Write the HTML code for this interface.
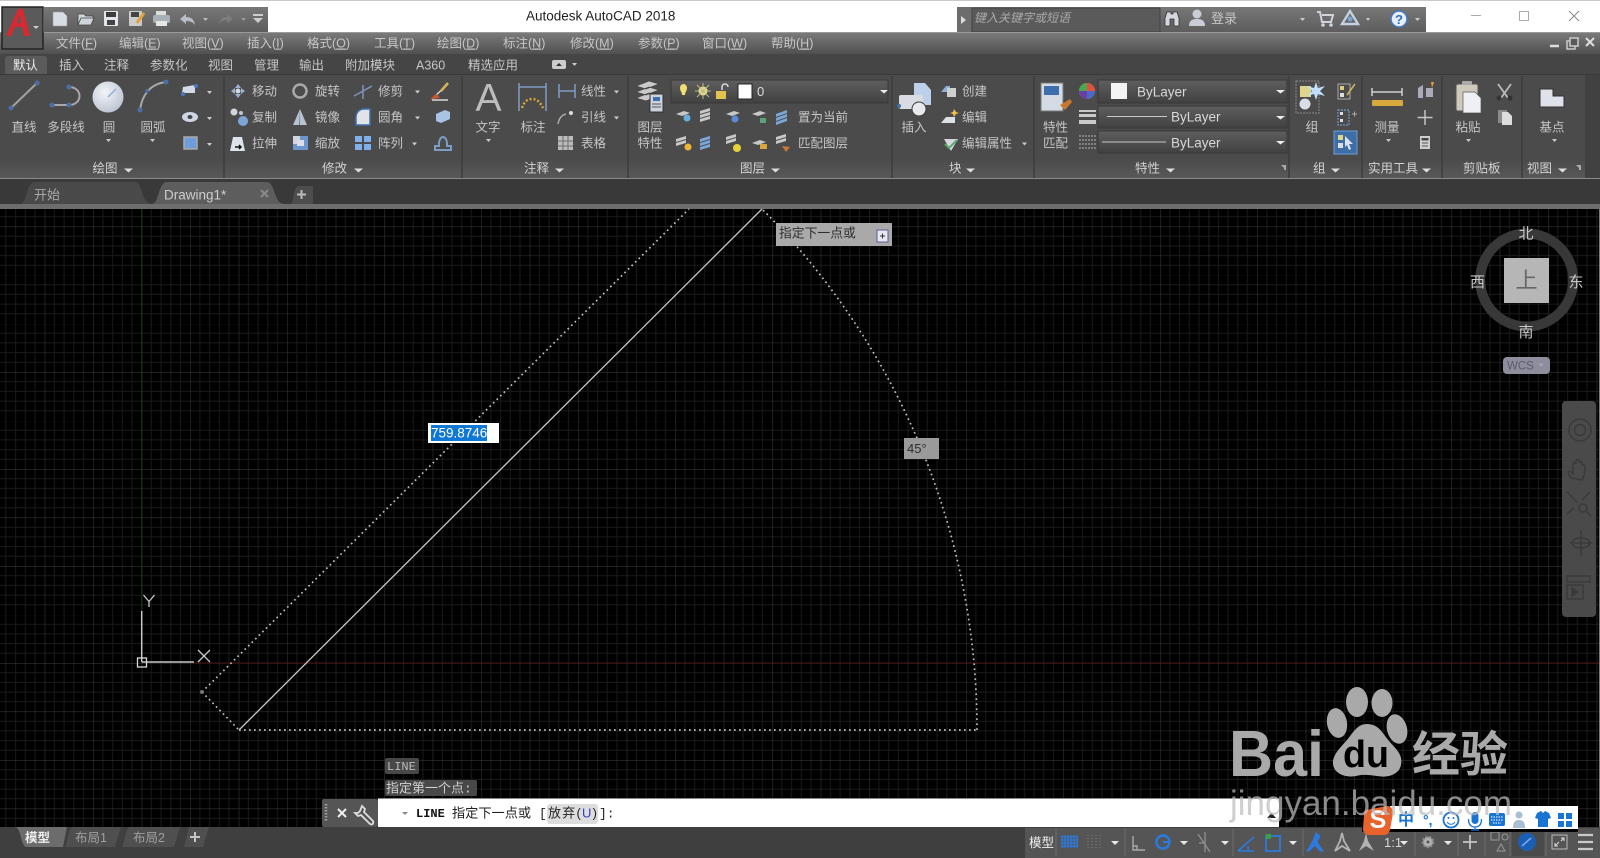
<!DOCTYPE html>
<html lang="zh"><head><meta charset="utf-8"><title>Autodesk AutoCAD 2018</title>
<style>
html,body{margin:0;padding:0;background:#000;width:1600px;height:858px;overflow:hidden}
svg{display:block;position:absolute;left:0;top:0;filter:blur(.35px)}
text{font-family:"Liberation Sans","Noto Sans CJK SC",sans-serif;font-size:12.5px;fill:#c6c6c6}
.m text,text.m{text-anchor:middle}
tspan.u{text-decoration:underline}
</style></head><body>
<svg width="1600" height="858" viewBox="0 0 1600 858" xmlns="http://www.w3.org/2000/svg">
<defs>
<pattern id="g" patternUnits="userSpaceOnUse" width="48.5" height="48.5" x="141.7" y="226.5">
<path d="M9.7 0V48.5M19.4 0V48.5M29.1 0V48.5M38.8 0V48.5M0 9.7H48.5M0 19.4H48.5M0 29.1H48.5M0 38.8H48.5" stroke="#1a1a1a" stroke-width="1" fill="none"/>
<path d="M0 0V48.5M0 0H48.5" stroke="#333" stroke-width="1.2" fill="none"/>
</pattern>
<linearGradient id="menu" x1="0" y1="0" x2="0" y2="1"><stop offset="0" stop-color="#7a7a7a"/><stop offset="1" stop-color="#505050"/></linearGradient>
<linearGradient id="qat" x1="0" y1="0" x2="0" y2="1"><stop offset="0" stop-color="#777"/><stop offset="1" stop-color="#5c5c5c"/></linearGradient>
<linearGradient id="foot" x1="0" y1="0" x2="0" y2="1"><stop offset="0" stop-color="#4a4a4a"/><stop offset="1" stop-color="#585858"/></linearGradient>
<linearGradient id="combo" x1="0" y1="0" x2="0" y2="1"><stop offset="0" stop-color="#5e5e5e"/><stop offset="1" stop-color="#414141"/></linearGradient>
<radialGradient id="cir" cx=".4" cy=".35" r=".8"><stop offset="0" stop-color="#f2f4f8"/><stop offset="1" stop-color="#b4bccb"/></radialGradient>
</defs>

<!-- title bar -->
<rect width="1600" height="33" fill="#fff"/>
<rect width="1600" height="1" fill="#c8c8c8"/>
<rect x="44" y="7" width="224" height="26" fill="url(#qat)"/>
<text x="526" y="20.5" style="font-size:13.5px;fill:#222">Autodesk AutoCAD 2018</text>
<rect x="957" y="7" width="469" height="26" fill="url(#qat)"/>
<rect x="957" y="7" width="14" height="26" fill="#6d6d6d"/>
<path d="M961 16l5 4-5 4z" fill="#ddd"/>
<rect x="972" y="8" width="188" height="24" fill="#5a5a5a" stroke="#444"/>
<text x="974" y="22" style="font-size:12px;fill:#aaa;font-style:italic">键入关键字或短语</text>
<!-- binoculars + user -->
<path d="M1165 26v-8l2-6h4v2h2v-2h4l2 6v8h-5v-7h-4v7z" fill="#d5d8de" stroke="#333" stroke-width=".8"/>
<circle cx="1197" cy="14" r="4.500" fill="#c9cdd5"/><path d="M1189 26c0-6 4-7 8-7s8 1 8 7z" fill="#c9cdd5"/>
<text x="1211" y="23" style="font-size:13px">登录</text>
<path d="M1300 18h5l-2.500 3z" fill="#ccc"/>
<path d="M1317 12h3l2 10h9l2-7h-11" fill="none" stroke="#d0d4da" stroke-width="2"/><circle cx="1323" cy="25" r="1.800" fill="#d0d4da"/><circle cx="1331" cy="25" r="1.800" fill="#d0d4da"/>
<path d="M1350 11l8 13h-16z" fill="none" stroke="#c3cfe2" stroke-width="2.400"/><circle cx="1350" cy="19" r="2.500" fill="#7fa4d8"/>
<path d="M1366 18h4l-2 3z" fill="#ccc"/>
<circle cx="1399" cy="19" r="8" fill="#e8eef6" stroke="#3f78c4" stroke-width="1.500"/>
<text class="m" x="1399" y="24" style="font-size:13px;font-weight:bold;fill:#2f6cc0">?</text>
<path d="M1415 18h5l-2.500 3z" fill="#ccc"/>
<!-- window controls -->
<path d="M1471 15.500h10" stroke="#aaa"/><rect x="1519.500" y="11.500" width="9" height="9" fill="none" stroke="#aaa"/><path d="M1569 11l10 10M1579 11l-10 10" stroke="#888"/>

<!-- qat icons -->
<path d="M53 12h10l4 4v10h-14z" fill="#d8dde4" stroke="#999" stroke-width=".5"/>
<path d="M78 14h6l2 2h7v2h-12l-3 7z M78 25l3-7h13l-3 7z" fill="#cfd4da" stroke="#444" stroke-width=".8"/>
<rect x="104" y="11" width="14" height="15" rx="1" fill="#e3e6ea"/><rect x="106" y="12" width="10" height="5" fill="#3c3c3c"/><rect x="107" y="20" width="8" height="5" fill="#444"/>
<rect x="129" y="11" width="13" height="15" rx="1" fill="#ccc"/><rect x="131" y="12" width="8" height="5" fill="#444"/><path d="M137 23l7-10" stroke="#e1a33c" stroke-width="3"/>
<rect x="156" y="11" width="10" height="5" fill="#ddd"/><rect x="153" y="15" width="17" height="8" rx="2" fill="#aab0b8"/><rect x="156" y="21" width="11" height="5" fill="#e6e6e6"/>
<path d="M180 19l6-5v3c5 0 8 2 9 8-2-3-5-4-9-4v3z" fill="#b7bec8"/>
<path d="M203 18h5l-2.500 3z" fill="#bbb"/>
<path d="M233 19l-6-5v3c-4 0-7 2-8 7 2-3 4-4 8-4v3z" fill="#7e7e7e"/>
<path d="M241 18h5l-2.500 3z" fill="#999"/>
<path d="M253 14h10v2h-10zM253 18h10l-5 5z" fill="#ccc"/>

<!-- menu bar -->
<rect y="33" width="1600" height="21" fill="url(#menu)"/>
<rect y="32" width="1600" height="1" fill="#999"/>
<g>
<text x="56" y="47.500">文件(<tspan class="u">F</tspan>)</text><text x="119" y="47.500">编辑(<tspan class="u">E</tspan>)</text><text x="182" y="47.500">视图(<tspan class="u">V</tspan>)</text><text x="247" y="47.500">插入(<tspan class="u">I</tspan>)</text><text x="307" y="47.500">格式(<tspan class="u">O</tspan>)</text><text x="374" y="47.500">工具(<tspan class="u">T</tspan>)</text><text x="437" y="47.500">绘图(<tspan class="u">D</tspan>)</text><text x="503" y="47.500">标注(<tspan class="u">N</tspan>)</text><text x="570" y="47.500">修改(<tspan class="u">M</tspan>)</text><text x="638" y="47.500">参数(<tspan class="u">P</tspan>)</text><text x="702" y="47.500">窗口(<tspan class="u">W</tspan>)</text><text x="771" y="47.500">帮助(<tspan class="u">H</tspan>)</text>
</g>
<path d="M1550 46h9" stroke="#ddd" stroke-width="2.500"/>
<rect x="1567" y="41" width="8" height="8" fill="none" stroke="#ccc" stroke-width="1.500"/><rect x="1570" y="38" width="8" height="8" fill="#5a5a5a" stroke="#ccc" stroke-width="1.500"/>
<path d="M1586 38l8 8M1594 38l-8 8" stroke="#ddd" stroke-width="2"/>

<!-- app button -->
<rect x="2" y="7" width="41" height="42" fill="#5a5a5a" stroke="#222" stroke-width="1.500"/>
<path d="M6 36L18 9h5l7 27h-6l-2-9h-7l-4 9zM17 23h4l-1-8z" fill="#d42a30" fill-rule="evenodd"/>
<path d="M33 26h6l-3 3z" fill="#ccc"/>

<!-- ribbon tab bar -->
<rect y="54" width="1600" height="20" fill="#454545"/>
<path d="M5 74v-16l2-2h38l2 2v16z" fill="#5b5b5b"/>
<g>
<text x="13" y="69.500" style="fill:#eee">默认</text><text x="59" y="69.500">插入</text><text x="104" y="69.500">注释</text><text x="150" y="69.500">参数化</text><text x="208" y="69.500">视图</text><text x="254" y="69.500">管理</text><text x="299" y="69.500">输出</text><text x="345" y="69.500">附加模块</text><text x="416" y="69.500">A360</text><text x="468" y="69.500">精选应用</text>
</g>
<rect x="552" y="60" width="14" height="9" rx="2" fill="#ccc"/><path d="M556 66l3-3 3 3z" fill="#333"/><path d="M572 63h5l-2.500 3z" fill="#ccc"/>

<!-- ribbon -->
<rect y="74" width="1600" height="104" fill="#4b4b4b"/>
<rect y="158" width="1585" height="20" fill="url(#foot)"/>
<rect x="1585" y="74" width="15" height="104" fill="#414141"/>
<rect y="74" width="1600" height="1" fill="#3a3a3a"/>
<rect y="178" width="1600" height="1" fill="#8a8a8a"/>
<path d="M224 76v102M462 76v102M628 76v102M892 76v102M1034 76v102M1289 76v102M1362 76v102M1442 76v102M1522 76v102" stroke="#3d3d3d" stroke-width="1.500"/>

<!-- draw panel -->
<path d="M11 108L36 84" stroke="#a2a2a2" stroke-width="2"/><circle cx="11" cy="108" r="2.500" fill="#4b6fa4"/><circle cx="37" cy="83" r="2.500" fill="#4b6fa4"/>
<path d="M52 105h17c14 0 14-18 0-18" fill="none" stroke="#a8a8a8" stroke-width="2"/><circle cx="52" cy="105" r="2.500" fill="#4b6fa4"/><circle cx="69" cy="105" r="2.500" fill="#4b6fa4"/><circle cx="69" cy="87" r="2.500" fill="#4b6fa4"/>
<circle cx="108" cy="97" r="15.500" fill="url(#cir)"/><path d="M108 97l8-8" stroke="#8fb0dc" stroke-width="1.500"/>
<path d="M140 110c2-15 10-26 26-28" fill="none" stroke="#a8a8a8" stroke-width="2"/><circle cx="140" cy="110" r="2.500" fill="#4b6fa4"/><circle cx="166" cy="82" r="2.500" fill="#4b6fa4"/><circle cx="147" cy="91" r="2" fill="#4b6fa4"/>
<g class="m"><text x="24" y="131.500">直线</text><text x="66" y="131.500">多段线</text><text x="109" y="131.500">圆</text><text x="153" y="131.500">圆弧</text></g>
<path d="M106 139h5l-2.500 3zM150 139h5l-2.500 3z" fill="#ccc"/>
<path d="M183 87l12-2v8h-13z" fill="#d5dbe6"/><circle cx="183" cy="94" r="2" fill="#4b78bd"/><circle cx="196" cy="86" r="2" fill="#4b78bd"/>
<ellipse cx="190" cy="117" rx="8" ry="5" fill="#cfd6e2"/><ellipse cx="190" cy="117" rx="2.500" ry="2" fill="#444"/>
<rect x="184" y="137" width="13" height="12" fill="#6f9cdb" stroke="#aaa" stroke-width="1.500"/>
<path d="M207 91h5l-2.500 3zM207 117h5l-2.500 3zM207 143h5l-2.500 3z" fill="#ccc"/>
<text class="m" x="105" y="172.500" style="fill:#d2d2d2">绘图</text><path d="M124 168.500h9l-4.500 4z" fill="#ddd"/>

<!-- modify panel -->
<path d="M238 84l3 4h-6zM238 98l3-4h-6zM231 91l4-3v6zM245 91l-4-3v6z" fill="#9bb3d3"/><circle cx="238" cy="91" r="2.500" fill="#cfd8e4"/>
<circle cx="300" cy="91" r="6.500" fill="none" stroke="#a9a9a9" stroke-width="2.500"/>
<path d="M354 96l18-10M363 85v14" stroke="#7e95b8" stroke-width="1.500"/>
<path d="M432 100h16M434 97l13-12" stroke="#d9d9d9" stroke-width="1.500"/><path d="M436 95l-3 3 5-1z" fill="#c9582f" stroke="#c9582f" stroke-width="2"/><path d="M441 91l7-8" stroke="#d6b35a" stroke-width="2.500"/>
<circle cx="234" cy="112" r="3.500" fill="#d2d6dc"/><circle cx="243" cy="121" r="5" fill="#7ea5d9"/><circle cx="241" cy="113" r="2" fill="#bfc8d4"/>
<path d="M300 109l7 16h-14z" fill="#b9c1cc"/><path d="M300 109v16h-1l1-16z" fill="#5a7fb4"/>
<path d="M356 125v-8c0-5 4-8 8-8h6v16z" fill="#e1e3e6" stroke="#3d6faf" stroke-width="1.500"/>
<path d="M436 114l9-4 5 2v7l-9 4-5-2z" fill="#a9c3e5"/>
<path d="M233 137h9l3 14h-15z" fill="#dfe4ec"/><path d="M235 147h6m-2-2l2 2-2 2" stroke="#111" stroke-width="1.500" fill="none"/>
<rect x="293" y="136" width="15" height="14" fill="#cfd6e0"/><rect x="300" y="136" width="8" height="14" fill="#6d96cc"/><rect x="293" y="144" width="15" height="6" fill="#6d96cc"/><rect x="297" y="140" width="7" height="6" fill="#dde"/>
<path d="M355 136h7v6h-7zM364 136h7v6h-7zM355 144h7v6h-7zM364 144h7v6h-7z" fill="#7fb0ec"/>
<path d="M435 150v-4h4v-3c0-3 2-6 4-6s4 3 4 6v3h4v4z" fill="none" stroke="#7b9cc4" stroke-width="2"/>
<g><text x="252" y="95.500">移动</text><text x="315" y="95.500">旋转</text><text x="378" y="95.500">修剪</text><text x="252" y="121.500">复制</text><text x="315" y="121.500">镜像</text><text x="378" y="121.500">圆角</text><text x="252" y="147.500">拉伸</text><text x="315" y="147.500">缩放</text><text x="378" y="147.500">阵列</text></g>
<path d="M415 90.500h5l-2.500 3zM415 116.500h5l-2.500 3zM412 142.500h5l-2.500 3z" fill="#ccc"/>
<text x="322" y="172.500" style="fill:#d2d2d2">修改</text><path d="M354 168.500h9l-4.500 4z" fill="#ddd"/>

<!-- annotate panel -->
<text class="m" x="488.500" y="111" style="font-size:39px;fill:#bdbdbd">A</text>
<text class="m" x="488" y="131.500">文字</text><path d="M486 139h5l-2.500 3z" fill="#ccc"/>
<path d="M519 83v28M546 83v28M519 87h27" stroke="#7f9cc4" stroke-width="1.500"/><path d="M522 108c2-6 5-9 10-9s8 3 11 9" fill="none" stroke="#d9a43a" stroke-width="2.500" stroke-dasharray="2 2"/>
<text class="m" x="533" y="131.500">标注</text>
<path d="M559 84v14M575 84v14M559 91h16" stroke="#7f9cc4" stroke-width="1.500"/>
<path d="M558 124c1-6 4-9 8-10" fill="none" stroke="#aaa" stroke-width="1.500"/><circle cx="571" cy="113" r="2" fill="#ddd"/>
<rect x="558" y="136" width="15" height="14" fill="#bcbcbc"/><path d="M558 141h15M558 146h15M563 136v14M568 136v14" stroke="#6d6d6d"/>
<text x="581" y="95.500">线性</text><text x="581" y="121.500">引线</text><text x="581" y="147.500">表格</text>
<path d="M614 90.500h5l-2.500 3zM614 116.500h5l-2.500 3z" fill="#ccc"/>
<text x="524" y="172.500" style="fill:#d2d2d2">注释</text><path d="M555 168.500h9l-4.500 4z" fill="#ddd"/>

<!-- layer panel -->
<path d="M636 86l13-5 10 3-13 5zM636 92l13-5 10 3-13 5zM636 98l13-5 10 3-13 5z" fill="#c9c9c9" stroke="#444" stroke-width=".7"/>
<rect x="650" y="94" width="13" height="18" fill="#cdd3dc" stroke="#333"/><rect x="653" y="97" width="7" height="4" fill="#3d6faf"/><path d="M652 104h9M652 107h9" stroke="#555"/>
<text class="m" x="650" y="131.500">图层</text><text class="m" x="650" y="147.500">特性</text>
<rect x="671" y="80" width="217" height="23" fill="url(#combo)" stroke="#383838"/>
<path d="M680 88a3.500 4 0 1 1 7 0c0 3-2 4-2 7h-3c0-3-2-4-2-7z" fill="#f0de72"/><circle cx="703" cy="91" r="4.500" fill="#f2ea8a"/><path d="M703 83v16M695 91h16M697 85l12 12M709 85l-12 12" stroke="#bdb98c"/>
<rect x="716" y="91" width="10" height="8" fill="#e2c34e"/><path d="M722 90v-3c0-4 6-4 6 0" fill="none" stroke="#ddd" stroke-width="1.500"/>
<rect x="738" y="84" width="14" height="15" fill="#fff" stroke="#222"/>
<text x="757" y="96" style="font-size:13px;fill:#ddd">0</text>
<path d="M880 90h8l-4 3.500z" fill="#eee"/>
<g fill="#c8c8c8">
<path d="M676 114l8-3 6 2-8 3z"/><circle cx="687" cy="118" r="3.500" fill="#6aaee0"/>
<path d="M700 111l10-3v3l-10 3zM700 115l10-3v3l-10 3zM700 119l10-3v3l-10 3z"/>
<path d="M726 114l8-3 6 2-8 3z"/><circle cx="735" cy="119" r="3.500" fill="#5b8ad6"/>
<path d="M752 114l8-3 6 2-8 3z"/><path d="M760 118h6v5h-6z" fill="#59a377"/>
<path d="M776 114l11-4v3l-11 4zM776 118l11-4v3l-11 4zM776 122l11-4v3l-11 4z" fill="#7aa7d8"/>
<path d="M676 139l10-3v3l-10 3zM676 143l10-3v3l-10 3z"/><circle cx="688" cy="147" r="3.500" fill="#edb53a"/>
<path d="M700 139l10-3v3l-10 3zM700 143l10-3v3l-10 3zM700 147l10-3v3l-10 3z" fill="#7aa7d8"/>
<path d="M726 137l10-3v3l-10 3zM726 141l10-3v3l-10 3z"/><circle cx="737" cy="148" r="4" fill="#e8d23a"/>
<path d="M752 143l8-3 6 2-8 3z"/><rect x="760" y="144" width="7" height="5" fill="#d9a83a"/>
<path d="M776 137l10-3v3l-10 3zM776 141l10-3v3l-10 3z"/><path d="M782 146l8 1-4 5z" fill="#c87634"/>
</g>
<text x="798" y="121.500">置为当前</text><text x="798" y="147.500">匹配图层</text>
<text x="740" y="172.500" style="fill:#d2d2d2">图层</text><path d="M771 168.500h9l-4.500 4z" fill="#ddd"/>

<!-- block panel -->
<path d="M914 83h11l6 7v15h-17z" fill="#bcd0ea"/><rect x="899" y="95" width="24" height="14" rx="2" fill="#d8dce2"/><circle cx="919" cy="109" r="7" fill="#e7e9ec" stroke="#3c3c3c"/><circle cx="899" cy="106" r="2" fill="#3d6faf"/>
<text class="m" x="914" y="131.500">插入</text>
<path d="M941 92l5-6h4v6z" fill="#8fb0dc"/><rect x="947" y="88" width="9" height="9" fill="#cfcfcf"/>
<path d="M941 123l5-6 9 0v6z" fill="#dcdfe4"/><path d="M954 109l2 3 3 1-3 1-2 3-1-3-3-1 3-1z" fill="#efc04a"/>
<path d="M944 139h14l-7 12z" fill="#d5d8de"/><path d="M945 144l4 4 8-8" stroke="#5ca86e" stroke-width="2" fill="none"/>
<text x="962" y="95.500">创建</text><text x="962" y="121.500">编辑</text><text x="962" y="147.500">编辑属性</text>
<path d="M1022 142.500h5l-2.500 3z" fill="#ccc"/>
<text x="949" y="172.500" style="fill:#d2d2d2">块</text><path d="M966 168.500h9l-4.500 4z" fill="#ddd"/>

<!-- properties panel -->
<rect x="1041" y="83" width="22" height="28" fill="#d5dbe4" stroke="#777"/><rect x="1044" y="86" width="15" height="9" fill="#3d6faf"/>
<path d="M1060 105l10-6 2 3-7 8z" fill="#c77a2e"/>
<text x="1043" y="131.500">特性</text><text x="1043" y="147.500">匹配</text>
<circle cx="1087" cy="91" r="8" fill="#d9a13a"/><path d="M1087 91V83a8 8 0 0 1 8 8z" fill="#e2503f"/><path d="M1087 91h8a8 8 0 0 1-8 8z" fill="#4c69c9"/><path d="M1087 91v8a8 8 0 0 1-8-8z" fill="#6a3fa5"/><path d="M1087 91h-8a8 8 0 0 1 8-8z" fill="#4aa84f"/>
<path d="M1079 110h17v2h-17zM1079 114h17v3h-17zM1079 120h17v4h-17z" fill="#c9c9c9"/>
<path d="M1079 136h17M1079 140h17M1079 144h17M1079 148h17" stroke="#b5b5b5" stroke-dasharray="2 1"/>
<rect x="1098" y="80" width="189" height="23" fill="url(#combo)" stroke="#383838"/>
<rect x="1098" y="106" width="189" height="22" fill="url(#combo)" stroke="#383838"/>
<rect x="1098" y="131" width="189" height="22" fill="url(#combo)" stroke="#383838"/>
<rect x="1111" y="83" width="16" height="16" fill="#f4f4f4"/>
<text x="1137" y="96.500" style="font-size:13.500px;fill:#d8d8d8">ByLayer</text>
<path d="M1107 116.500h60M1102 142h64" stroke="#c8c8c8"/>
<text x="1171" y="121.500" style="font-size:13.500px;fill:#d8d8d8">ByLayer</text><text x="1171" y="147.500" style="font-size:13.500px;fill:#d8d8d8">ByLayer</text>
<path d="M1276 90h9l-4.500 3.500zM1276 116h9l-4.500 3.500zM1276 141h9l-4.500 3.500z" fill="#eee"/>
<text x="1135" y="172.500" style="fill:#d2d2d2">特性</text><path d="M1166 168.500h9l-4.500 4z" fill="#ddd"/>
<path d="M1281 165l5 0v5zM1286 170h-2v-2z" fill="#aaa"/>

<!-- group panel -->
<rect x="1296" y="81" width="23" height="32" fill="none" stroke="#888" stroke-dasharray="2 1"/><rect x="1300" y="86" width="11" height="11" fill="#e0d58a"/><circle cx="1305" cy="104" r="5.500" fill="#d8dde6"/>
<path d="M1316 82l2 6 7-2-5 5 5 5-7-2-2 6-2-6-7 2 5-5-5-5 7 2z" fill="#bfe0ff"/>
<text class="m" x="1312" y="131.500" style="font-size:13px">组</text>
<rect x="1338" y="84" width="12" height="15" fill="none" stroke="#aaa"/><rect x="1340" y="86" width="4" height="4" fill="#d9cf7a"/><rect x="1340" y="93" width="4" height="4" fill="#ddd"/><path d="M1347 95l8-11" stroke="#d6b35a" stroke-width="1.500"/>
<rect x="1338" y="110" width="11" height="15" fill="none" stroke="#7aa7d8" stroke-dasharray="2 1"/><rect x="1340" y="112" width="3" height="3" fill="#ddd"/><rect x="1340" y="119" width="3" height="3" fill="#ddd"/><path d="M1352 114h5M1354.500 111.500v5" stroke="#aaa"/>
<rect x="1334" y="131" width="23" height="23" fill="#3f6ea6" stroke="#6d9ed6"/><rect x="1338" y="135" width="5" height="5" fill="#e0d58a"/><rect x="1338" y="143" width="5" height="5" fill="#ddd"/><path d="M1345 136l8 8-4 0 2 5-2 1-2-5-2 2z" fill="#d9e4f2"/>
<text x="1313" y="172.500" style="fill:#d2d2d2">组</text><path d="M1331 168.500h9l-4.500 4z" fill="#ddd"/>

<!-- utilities -->
<path d="M1372 92h30M1372 88v8M1402 88v8" stroke="#d0d0d0" stroke-width="1.500"/><rect x="1372" y="100" width="31" height="6" rx="1" fill="#d9a93c"/>
<text class="m" x="1387" y="131.500">测量</text><path d="M1386 139h5l-2.500 3z" fill="#ccc"/>
<path d="M1418 88l5-3v13h-5zM1426 88h7v9h-7z" fill="#aab"/><path d="M1431 82l3 0-2 6z" fill="#e9a13c"/>
<path d="M1425 110v15M1417.500 117.500h15" stroke="#c5c5c5" stroke-width="1.500"/>
<rect x="1420" y="136" width="10" height="13" fill="#cfcfcf"/><rect x="1421.500" y="138" width="7" height="2.500" fill="#444"/><path d="M1422 143h6M1422 146h6" stroke="#555"/>
<text x="1368" y="172.500" style="fill:#d2d2d2">实用工具</text><path d="M1422 168.500h9l-4.500 4z" fill="#ddd"/>

<!-- clipboard -->
<rect x="1456" y="84" width="22" height="27" rx="2" fill="#cfc9bc" stroke="#555"/><rect x="1462" y="81" width="10" height="4" rx="1" fill="#aaa"/><path d="M1463 92h12l6 6v15h-18z" fill="#eef0f3" stroke="#555" stroke-width=".7"/>
<text class="m" x="1468" y="131.500">粘贴</text><path d="M1466 139h5l-2.500 3z" fill="#ccc"/>
<path d="M1498 84l10 14M1511 84l-10 14" stroke="#bbb" stroke-width="1.800"/><circle cx="1499" cy="98" r="2.500" fill="#333"/><circle cx="1510" cy="98" r="2.500" fill="#333"/>
<rect x="1498" y="110" width="9" height="13" fill="#8c8c8c"/><path d="M1502 112h6l4 4v9h-10z" fill="#ddd"/>
<text x="1463" y="172.500" style="fill:#d2d2d2">剪贴板</text>

<!-- base point -->
<path d="M1540 89h13v7h11v11h-24z" fill="#dfe2ea" stroke="#333"/>
<text class="m" x="1552" y="131.500">基点</text><path d="M1552 139h5l-2.500 3z" fill="#ccc"/>
<text x="1527" y="172.500" style="fill:#d2d2d2">视图</text><path d="M1558 168.500h9l-4.500 4z" fill="#ddd"/>
<path d="M1576 165l5 0v5zM1581 170h-2v-2z" fill="#aaa"/>

<!-- file tabs -->
<rect y="179" width="1600" height="26" fill="#393939"/>
<path d="M20 204c7 0 6-22 15-22h100c8 0 6 22 17 22z" fill="#494949"/>
<path d="M152 204c7 0 6-22 15-22h100c8 0 7 22 17 22z" fill="#5d5d5d"/>
<path d="M290 204c5 0 2-18 9-18h14v18z" fill="#4d4d4d"/>
<text x="34" y="199.500" style="font-size:13px;fill:#a8a8a8">开始</text>
<text x="164" y="199.500" style="font-size:13.500px;fill:#cdcdcd">Drawing1*</text>
<path d="M261 190l7 7M268 190l-7 7" stroke="#8a8a8a" stroke-width="2"/>
<path d="M301.500 190v9M297 194.500h9" stroke="#bbb" stroke-width="2"/>
<rect y="204" width="1600" height="5" fill="#6d6d6d"/>

<!-- canvas -->
<rect y="209" width="1600" height="618" fill="#000"/>
<rect y="209" width="1600" height="618" fill="url(#g)"/>
<path d="M141.700 209V611" stroke="#123d12" stroke-width="1"/>
<path d="M194 663H1600" stroke="#4f1515" stroke-width="1"/>
<rect x="1599" y="209" width="1" height="618" fill="#777"/>
<!-- drawing -->
<path d="M239 730L762 209" stroke="#c6c6c6" stroke-width="1.300" fill="none"/>
<path d="M202 692L689 209M202 692L239 730M239 730H977" stroke="#bdbdbd" stroke-width="1.700" stroke-dasharray="1.700 3.300" fill="none"/>
<path d="M977 730A738 738 0 0 0 762 209" stroke="#bdbdbd" stroke-width="1.700" stroke-dasharray="1.700 3.300" fill="none"/>
<circle cx="202" cy="692" r="2" fill="#777"/>
<!-- UCS -->
<path d="M141.700 662V611M141.700 662H194" stroke="#c8c8c8" stroke-width="1.500"/>
<rect x="137.500" y="658" width="9" height="9" fill="none" stroke="#d8d8d8" stroke-width="1.300"/>
<path d="M198 650l12 12M210 650l-12 12M143.500 595l5.500 6.500 5.500-6.500M149 601.500V607" stroke="#c8c8c8" stroke-width="1.300" fill="none"/>
<!-- dynamic tips -->
<rect x="776" y="223" width="116" height="23" fill="#a9a9a9"/>
<text x="779" y="237.500" style="font-size:12.800px;fill:#2e2e2e">指定下一点或</text>
<rect x="877" y="230" width="11" height="12" fill="#e8e8f0" stroke="#5a5a9a"/><path d="M880 236h5M882.500 233.500v5" stroke="#333"/>
<rect x="428" y="423" width="71" height="20" fill="#fff"/>
<rect x="431" y="425" width="56" height="16" fill="#0f78d4"/>
<text x="431" y="437.500" style="font-size:13.500px;fill:#fff">759.8746</text>
<rect x="904" y="438" width="35" height="21" fill="#9a9a9a"/>
<text x="907" y="453" style="font-size:13px;fill:#2e2e2e">45°</text>

<!-- viewcube -->
<circle cx="1526.700" cy="280" r="46.500" fill="none" stroke="#383838" stroke-width="10"/>
<rect x="1504" y="258" width="45" height="45" fill="#b6b6b6"/>
<text class="m" x="1526.500" y="288" style="font-size:22px;fill:#666">上</text>
<text class="m" x="1526" y="238.500" style="font-size:15px;fill:#c9c9c9">北</text><text class="m" x="1576" y="287" style="font-size:15px;fill:#c9c9c9">东</text><text class="m" x="1526" y="337" style="font-size:15px;fill:#c9c9c9">南</text><text class="m" x="1477.500" y="287" style="font-size:15px;fill:#c9c9c9">西</text>
<rect x="1503" y="357" width="47" height="17" rx="4" fill="#8d8d9e"/>
<text x="1507" y="369.500" style="font-size:11.500px;fill:#5c5c68">WCS</text><path d="M1538 363.500h6l-3 3z" fill="#a3a3b3"/>

<!-- nav bar -->
<rect x="1562" y="401" width="34" height="216" rx="4" fill="#4a4a4a"/>
<g fill="none" stroke="#3a3a3a" stroke-width="1.500">
<circle cx="1580" cy="430" r="11"/><circle cx="1580" cy="430" r="5.500"/>
<path d="M1571 478c-4-6-3-8 0-6l2 2v-10c0-2 3-2 3 0v-3c0-2 3-2 3 0v2c0-2 3-2 3 0v3c0-2 3-1 3 1 0 6-1 10-3 13z"/>
<path d="M1567 492l10 10M1590 492l-8 8"/><circle cx="1583" cy="508" r="4"/><path d="M1586 511l5 5M1567 514l7-6"/>
<path d="M1581 530v26M1570 543h22"/><ellipse cx="1581" cy="543" rx="9" ry="5"/>
<rect x="1567" y="576" width="23" height="6"/><rect x="1567" y="585" width="16" height="14"/><path d="M1572 588l6 4-6 4z" fill="#3a3a3a"/>
</g>

<!-- baidu watermark -->
<text x="1229" y="776" textLength="95" lengthAdjust="spacingAndGlyphs" style="font-size:65px;font-weight:bold;fill:#a9a9a9">Bai</text>
<ellipse cx="1357" cy="702" rx="11" ry="15" fill="#a9a9a9"/><ellipse cx="1382" cy="703" rx="10.500" ry="14" fill="#a9a9a9"/>
<ellipse cx="1337" cy="723" rx="10" ry="15" transform="rotate(-10 1337 723)" fill="#a9a9a9"/><ellipse cx="1397" cy="729" rx="10" ry="15" transform="rotate(-15 1397 729)" fill="#a9a9a9"/>
<path d="M1367 724c12 0 16 10 22 17 8 9 14 14 12 24-2 10-14 13-24 11-7-1-14-2-21-0-10 2-22-2-23-12-1-9 8-17 14-24 6-7 10-16 20-16z" fill="#a9a9a9"/>
<text x="1343" y="767" textLength="46" lengthAdjust="spacingAndGlyphs" style="font-size:38px;font-weight:bold;fill:#000">du</text>
<text x="1412" y="771" textLength="96" lengthAdjust="spacingAndGlyphs" style="font-size:48px;font-weight:bold;fill:#a9a9a9">经验</text>

<!-- status bar -->
<rect y="827" width="1600" height="31" fill="#3f3f3f"/>
<rect x="1025" y="828" width="575" height="30" fill="#555"/>

<!-- layout tabs -->
<path d="M15 827c7 1 5 20 12 20h36l4-20z" fill="#6c6c6c"/>
<path d="M65 847c2 0 3-20 8-20h48l-6 20z" fill="#4f4f4f"/>
<path d="M122 847c2 0 3-20 8-20h50l-6 20z" fill="#4f4f4f"/>
<path d="M184 847l5-20h20l-6 20z" fill="#4f4f4f"/>
<text x="25" y="842" style="font-weight:bold;fill:#efefef">模型</text>
<text x="75" y="842" style="fill:#a0a0a0">布局1</text>
<text x="133" y="842" style="fill:#a0a0a0">布局2</text>
<path d="M195 832v10M190 837h10" stroke="#c4c4c4" stroke-width="2"/>

<!-- command line -->
<rect x="385" y="758" width="34" height="16" rx="2" fill="#484848"/>
<text x="387" y="770" style="font-family:'Liberation Mono',monospace;font-size:12px;fill:#bbb">LINE</text>
<rect x="385" y="780" width="92" height="16" rx="2" fill="#484848"/>
<text x="386" y="792.500" style="font-family:'Liberation Mono','Noto Sans CJK SC',monospace;font-size:13px;fill:#d0d0d0">指定第一个点:</text>
<rect x="322" y="799" width="56" height="28" rx="2" fill="#555"/>
<path d="M326 804v18" stroke="#a0a0a0" stroke-dasharray="1.500 1.500" stroke-width="2.500"/>
<path d="M338 809l8 8M346 809l-8 8" stroke="#eee" stroke-width="2"/>
<path d="M360 806l3 3-1 3 9 9c1 3-1 4-3 3l-9-9-3 1-3-3 3 0 2-2z" fill="none" stroke="#ddd" stroke-width="1.800" transform="translate(2 0)"/>
<rect x="378" y="799" width="901" height="28" fill="#fff"/>
<rect x="378" y="798" width="901" height="1" fill="#888"/>
<path d="M402 812h6l-3 3z" fill="#888"/>
<text x="416" y="817" style="font-family:'Liberation Mono',monospace;font-weight:bold;font-size:12px;fill:#111">LINE</text>
<text x="452" y="817.500" style="font-size:13.200px;fill:#222">指定下一点或</text>
<text x="539" y="817.500" style="font-family:'Liberation Mono',monospace;font-size:13px;fill:#222">[</text>
<rect x="547" y="804" width="51" height="20" rx="3" fill="#ddd"/>
<text x="548" y="817.500" textLength="49" style="font-size:13px;fill:#222">放弃(<tspan style="fill:#2f3fbf">U</tspan>)</text>
<text x="599" y="817.500" style="font-family:'Liberation Mono',monospace;font-size:13px;fill:#222">]:</text>
<path d="M1267 818h9l-4.500-5z" fill="#222"/>

<!-- right status -->
<path d="M1056 829v27M1125 829v27M1233 829v27M1303 829v27M1415 829v27M1458 829v27M1485 829v27M1510 829v27M1546 829v27" stroke="#6d6d6d"/>
<text x="1029" y="847" style="fill:#eee">模型</text>
<g stroke="#2b7adf" stroke-width="1.200"><path d="M1062 835v13M1065 835v13M1068 835v13M1071 835v13M1074 835v13M1077 835v13M1061 837h17M1061 840h17M1061 843h17M1061 846h17"/></g>
<path d="M1088 835v13M1092 835v13M1096 835v13M1100 835v13" stroke="#808080" stroke-dasharray="1 2"/>
<path d="M1111 841h8l-4 4zM1180 841h8l-4 4zM1221 841h8l-4 4zM1289 841h8l-4 4zM1400 841h8l-4 4zM1444 841h8l-4 4z" fill="#e8e8e8"/>
<path d="M1133 836v14h12M1133 846h4v4" fill="none" stroke="#a9a9a9" stroke-width="1.400"/>
<circle cx="1163" cy="842" r="6.500" fill="none" stroke="#2b7adf" stroke-width="2.500"/><path d="M1163 842h7" stroke="#2b7adf" stroke-width="2"/>
<path d="M1198 834l12 18M1205 832v20M1199 843h6" stroke="#909090" stroke-width="1.300" fill="none"/>
<path d="M1238 851l16-14M1238 851h16M1248 846v5" stroke="#2b7adf" stroke-width="1.600" fill="none"/>
<rect x="1266" y="836" width="14" height="15" fill="none" stroke="#2b7adf" stroke-width="1.800"/><rect x="1266" y="834" width="5" height="5" fill="#3aa040"/>
<path d="M1316 833l4 3-3 6 6 9h-3l-5-6-6 6h-2l6-10z" fill="#2b7adf" stroke="#2b7adf" stroke-width="1"/>
<path d="M1342 833l2 8 6 10-8-5-7 5 5-10z" fill="none" stroke="#b2b2b2" stroke-width="1.800"/>
<path d="M1366 833l2 8 6 10-8-5-7 5 5-10z" fill="#b2b2b2"/>
<text x="1384" y="847" style="font-size:13px;fill:#d8d8d8">1:1</text>
<circle cx="1428" cy="842" r="5" fill="#b3b3b3" stroke="#8f8f8f" stroke-width="2.500" stroke-dasharray="2 1.500"/><circle cx="1428" cy="842" r="1.500" fill="#555"/>
<path d="M1470 835v14M1463 842h14" stroke="#c4c4c4" stroke-width="1.800"/>
<rect x="1491" y="832" width="8" height="8" fill="none" stroke="#999"/><circle cx="1505" cy="837" r="3" fill="none" stroke="#999"/><path d="M1497 851l4-7 4 7z" fill="none" stroke="#999"/>
<rect x="1512" y="829" width="32" height="27" fill="#4a4a4a"/><circle cx="1527" cy="842" r="9" fill="#1b5fb5"/><path d="M1522 846l9-8" stroke="#7fb1ee" stroke-width="1.500"/>
<rect x="1552" y="835" width="15" height="14" fill="none" stroke="#bbb"/><path d="M1555 846l4-4M1564 838l-3 3M1555 843v3h3M1564 841v-3h-3" stroke="#ddd" fill="none"/>
<path d="M1578 835h15M1578 842h15M1578 849h15" stroke="#c9c9c9" stroke-width="2.200"/>

<!-- sogou bar -->
<rect x="1362" y="806" width="216" height="26" fill="#000"/>
<rect x="1390" y="806" width="188" height="23" fill="#fff"/>
<path d="M1366 810l21-4c4 0 6 3 6 7l-3 17c-1 3-3 5-6 5h-15c-4 0-6-3-6-6l1-14c0-3 1-5 2-5z" fill="#e8622c"/>
<text class="m" x="1378" y="828" style="font-size:25px;font-weight:bold;fill:#fff">S</text>
<text x="1398" y="825" style="font-size:16px;font-weight:bold;fill:#1a74d2">中</text>
<text x="1423" y="825" style="font-size:14px;font-weight:bold;fill:#1a74d2">°,</text>
<circle cx="1451" cy="820" r="7.500" fill="none" stroke="#1a74d2" stroke-width="1.800"/><circle cx="1448.500" cy="818" r="1" fill="#1a74d2"/><circle cx="1453.500" cy="818" r="1" fill="#1a74d2"/><path d="M1447 822c2 3 6 3 8 0" stroke="#1a74d2" fill="none"/>
<rect x="1471.500" y="812" width="7" height="12" rx="3.500" fill="#1a74d2"/><path d="M1468.500 819c0 6 3 8 6.500 8s6.500-2 6.500-8M1475 827v3M1471 830h8" stroke="#1a74d2" fill="none" stroke-width="1.300"/>
<rect x="1489" y="813" width="16" height="13" rx="2" fill="#1a74d2"/><path d="M1491 817h12M1491 820h12M1493 823h8" stroke="#fff" stroke-dasharray="1.500 1"/>
<circle cx="1519" cy="815" r="3.500" fill="#a9bdd3"/><path d="M1513 828c0-6 2-8 6-8s6 2 6 8z" fill="#a9bdd3"/>
<path d="M1537 813l4-2 2 2 2-2 4 2 2 5-3 1v8h-10v-8l-3-1z" fill="#1a74d2"/>
<path d="M1558 813h6v6h-6zM1566 813h6v6h-6zM1558 821h6v6h-6zM1566 821h6v6h-6z" fill="#1a74d2"/>

<!-- watermark over -->
<text x="1230" y="815" textLength="282" lengthAdjust="spacingAndGlyphs" style="font-size:35px;fill:#bdbdbd;fill-opacity:.72">jingyan.baidu.com</text>
</svg>
</body></html>
